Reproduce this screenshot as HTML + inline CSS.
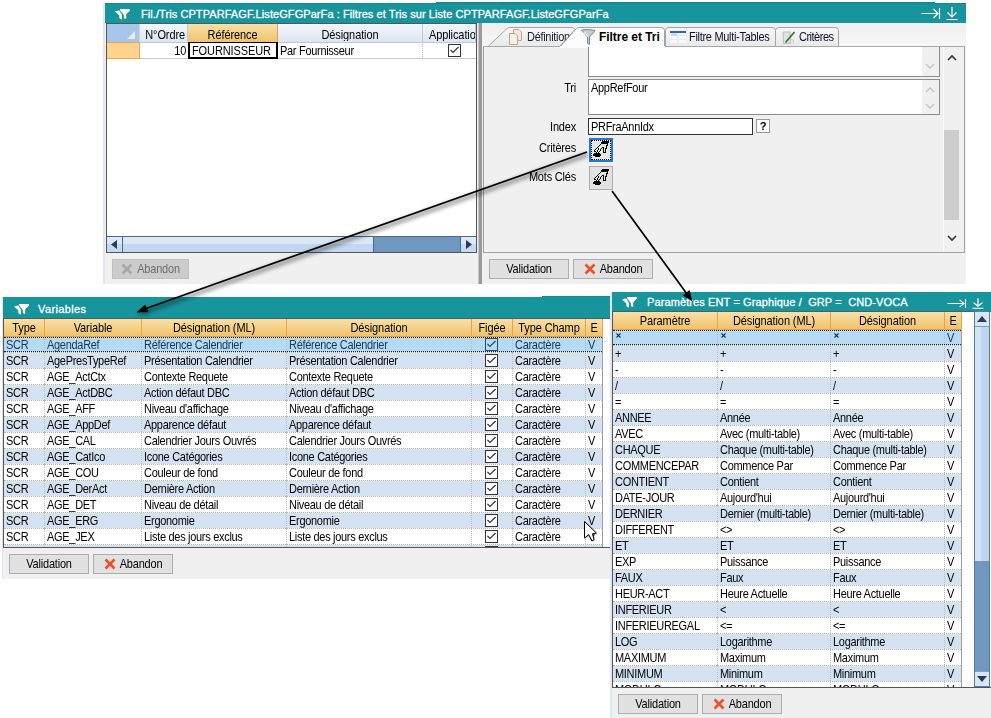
<!DOCTYPE html><html><head><meta charset="utf-8"><style>
*{box-sizing:border-box;margin:0;padding:0}
html,body{width:991px;height:718px;overflow:hidden;background:#fff}
body{position:relative;font-family:"Liberation Sans",sans-serif;font-size:11px;color:#000}
.a{position:absolute}
.win{position:absolute;background:#f0f0f0}
.tb{position:absolute;background:#18949c;color:#fff;font-weight:normal;font-size:11px;white-space:nowrap;overflow:hidden;-webkit-text-stroke:0.3px #fff}
.hd{position:absolute;background:linear-gradient(#f9e0a8,#f0c36c);border-bottom:1px solid #f29a30;border-right:1px solid #f0a040;text-align:center;white-space:nowrap;overflow:hidden;letter-spacing:-0.1px}
i.s{font-style:normal;display:inline-block;transform:scaleY(1.12);transform-origin:0 9px}
.c i{font-style:normal;display:inline-block;transform:scaleY(1.12);transform-origin:0 11px;position:relative;top:1px}
.c{position:absolute;height:16px;line-height:16px;padding-left:3px;overflow:hidden;white-space:nowrap;letter-spacing:-0.3px}
.btn{position:absolute;height:20px;background:#e1e1e1;border:1px solid #adadad;text-align:center;line-height:18px;white-space:nowrap;letter-spacing:-0.2px}
.lbl{position:absolute;text-align:right;white-space:nowrap;letter-spacing:-0.2px}
.chk{position:absolute;width:13px;height:13px;border:1px solid #333;background:#fff}
svg{position:absolute;overflow:visible}
</style></head><body>
<div class="win" style="left:103px;top:3px;width:863px;height:281px;border-left:2px solid #dfe8f1"></div>
<div class="tb" style="left:105px;top:3px;width:861px;height:20px;line-height:20px"><span class="a" style="left:36px;top:1px;letter-spacing:0.074px">Fil./Tris CPTPARFAGF.ListeGFGParFa : Filtres et Tris sur Liste CPTPARFAGF.ListeGFGParFa</span></div>
<div class="a" style="left:436px;top:2px;width:499px;height:1px;background:#138a92"></div>
<div class="a" style="left:105px;top:3px;width:861px;height:1px;background:#138a92"></div>
<svg class="a" style="left:115px;top:9px" width="16" height="12" viewBox="0 0 16 12"><path d="M5 0 H15 V1.5 L11.2 5.3 V9.8 L9.8 9.8 L8.8 8.6 V5.9 L5 1.3 Z" fill="#fff"/><path d="M0 2.2 L4.3 1.5 L6.9 5.7 V10.5 L5.9 10.3 L4.3 8.9 V6.6 Z" fill="#fff"/></svg>
<svg class="a" style="left:921px;top:8px" width="42" height="16" viewBox="0 0 42 16"><g transform="scale(1,1.0)"><path d="M0.5 5.5 H17 M12.5 1 L17 5.5 L12.5 10 M18.5 0 V11" stroke="#fff" stroke-width="1.2" fill="none"/><path d="M31 -1 V9 M26.5 4.5 L31 9 L35.5 4.5 M25.5 11.5 H36.5" stroke="#fff" stroke-width="1.2" fill="none"/></g></svg>
<div class="a" style="left:106px;top:23px;width:371px;height:230px;background:#fff;border:1px solid #555"></div>
<div class="a" style="left:107px;top:24px;width:33px;height:19px;background:#a8c4e8;border-right:1px solid #c9d6ea"></div>
<svg class="a" style="left:127px;top:31px" width="8" height="8"><path d="M8 0 L8 8 L0 8 Z" fill="#e4ecf6"/></svg>
<div class="hd" style="left:140px;top:24px;width:48px;height:19px;line-height:20px;background:linear-gradient(#f3f6fb,#dde5f1);border-right:1px solid #b9c9de;border-bottom:1px solid #b9c9de;text-align:right;padding-right:2px"><i class="s">N°Ordre</i></div>
<div class="hd" style="left:188px;top:24px;width:90px;height:19px;line-height:20px"><i class="s">Référence</i></div>
<div class="hd" style="left:278px;top:24px;width:145px;height:19px;line-height:20px;background:linear-gradient(#f3f6fb,#dde5f1);border-right:1px solid #b9c9de;border-bottom:1px solid #b9c9de"><i class="s">Désignation</i></div>
<div class="hd" style="left:423px;top:24px;width:53px;height:19px;line-height:20px;background:linear-gradient(#f3f6fb,#dde5f1);border-right:1px solid #b9c9de;border-bottom:1px solid #b9c9de;text-align:left;padding-left:6px"><i class="s">Application</i></div>
<div class="a" style="left:107px;top:42px;width:33px;height:17px;background:#fdd38e;border:1px solid #f4a24c;border-left:none"></div>
<div class="c" style="left:140px;top:42px;width:48px;height:17px;text-align:right;padding-right:2px;border-bottom:1px solid #c8c8c8"><i>10</i></div>
<div class="c" style="left:188px;top:42px;width:90px;height:17px;border:2px solid #000;border-top:1px solid #000;line-height:14px;padding-left:2px;letter-spacing:-0.1px"><i>FOURNISSEUR</i></div>
<div class="c" style="left:278px;top:42px;width:145px;height:17px;border-bottom:1px solid #c8c8c8;border-right:1px dotted #bbb;padding-left:2px"><i>Par Fournisseur</i></div>
<div class="c" style="left:423px;top:42px;width:53px;height:17px;border-bottom:1px solid #c8c8c8"></div>
<svg class="a" style="left:448px;top:44px" width="13" height="13" viewBox="0 0 13 13"><rect x="0.5" y="0.5" width="12" height="12" fill="#fff" stroke="#333" stroke-width="1"/><path d="M2.5 6 L5 8.5 L10.5 3" stroke="#333" stroke-width="1.2" fill="none"/></svg>
<div class="a" style="left:107px;top:236px;width:369px;height:16px;background:#7097c0;border-top:1px solid #4d6a8c"></div>
<div class="a" style="left:122px;top:237px;width:252px;height:15px;background:linear-gradient(#d9e7f7 0 45%,#c2d7f0 45%);border-left:1px solid #4d6a8c;border-right:1px solid #4d6a8c"></div>
<div class="a" style="left:107px;top:237px;width:15px;height:15px;background:linear-gradient(#dbe8f7 0 45%,#c5d9f0 45%)"></div>
<svg class="a" style="left:111px;top:240px" width="6" height="9"><path d="M6 0 L0 4.5 L6 9 Z" fill="#2b3a55"/></svg>
<div class="a" style="left:460px;top:237px;width:16px;height:15px;background:linear-gradient(#dbe8f7 0 45%,#c5d9f0 45%);border-left:1px solid #4d6a8c"></div>
<svg class="a" style="left:466px;top:240px" width="6" height="9"><path d="M0 0 L6 4.5 L0 9 Z" fill="#2b3a55"/></svg>
<div class="btn" style="left:112px;top:259px;width:77px;background:#cccccc;border-color:#bfbfbf;color:#6d6d6d;padding-left:16px"><i class="s">Abandon</i></div>
<svg class="a" style="left:121px;top:263px" width="12" height="12" viewBox="0 0 12 12"><path d="M1.5 1.5 L10.5 10.5 M10.5 1.5 L1.5 10.5" stroke="#a8a8a8" stroke-width="2.7" fill="none"/></svg>
<div class="a" style="left:478px;top:23px;width:4px;height:261px;background:#9a9a9a;border-left:1px solid #c8c8c8"></div>
<div class="a" style="left:483px;top:23px;width:483px;height:24px;background:linear-gradient(#efefef,#f7f7f7)"></div>
<div class="a" style="left:483px;top:46px;width:482px;height:207px;background:#f0f0f0;border:1px solid #a0a0a0;border-top:1px solid #a8a8a8"></div>
<svg class="a" style="left:483px;top:26px" width="360" height="22" viewBox="0 0 360 22">
<defs><linearGradient id="tg" x1="0" y1="0" x2="0" y2="1"><stop offset="0" stop-color="#f7f7f7"/><stop offset="1" stop-color="#e9e9e9"/></linearGradient></defs>
<path d="M5.5 20 L24 2.5 Q25 1.5 27 1.5 H90 L92 3.5 L77 20" fill="url(#tg)" stroke="#a3a3a3" stroke-width="1"/>
<path d="M182.5 20 V4.5 Q182.5 1.5 186 1.5 H289 Q292.5 1.5 292.5 4.5 V20" fill="url(#tg)" stroke="#a3a3a3" stroke-width="1"/>
<path d="M292.5 20 V4.5 Q292.5 1.5 296 1.5 H352 Q355.5 1.5 355.5 4.5 V20" fill="url(#tg)" stroke="#a3a3a3" stroke-width="1"/>
</svg>
<div class="a" style="left:527px;top:31px;letter-spacing:-0.3px;color:#1a1a3a"><i class="s">Définition</i></div>
<svg class="a" style="left:483px;top:26px" width="360" height="22" viewBox="0 0 360 22">
<path d="M77 21 L92.5 3.5 Q94 1.5 97 1.5 H178 Q181.5 1.5 181.5 4.5 V21 Z" fill="#fcfcfc" stroke="#a3a3a3" stroke-width="1"/>
<rect x="77" y="20" width="105" height="2" fill="#fcfcfc"/>
</svg>
<div class="a" style="left:599px;top:30px;font-weight:bold;letter-spacing:-0.05px;font-size:12px">Filtre et Tri</div>
<div class="a" style="left:689px;top:31px;letter-spacing:-0.3px;color:#10102a"><i class="s">Filtre Multi-Tables</i></div>
<div class="a" style="left:799px;top:31px;letter-spacing:-0.5px;color:#10102a"><i class="s">Critères</i></div>
<svg class="a" style="left:509px;top:29px" width="14" height="16" viewBox="0 0 14 16"><path d="M4.5 0.5 H10 L12.5 3 V11.5 H4.5 Z" fill="#f1eadc" stroke="#b4aa94" stroke-width="1"/><path d="M0.5 4.5 H6 L8.5 7 V15.5 H0.5 Z" fill="#f6f1e6" stroke="#b4aa94" stroke-width="1"/></svg>
<svg class="a" style="left:581px;top:29px" width="15" height="16" viewBox="0 0 15 16"><path d="M0.5 1 Q7 -0.5 14 1.5 L8.5 8 V15.5 L6.5 14.5 V8 Z" fill="#c4ccd4" stroke="#7a8894" stroke-width="1"/><path d="M3 3 L7 7.5" stroke="#eef2f5" stroke-width="1.5"/></svg>
<svg class="a" style="left:670px;top:31px" width="16" height="13" viewBox="0 0 16 13"><rect x="0" y="0" width="16" height="12" fill="#f4f7fb"/><path d="M0 4.5 H16 M0 8.5 H16 M8 2 V12" stroke="#e2e8f0" stroke-width="1"/><rect x="0" y="0" width="16" height="2" fill="#1f66d0"/><rect x="1" y="2.5" width="6" height="2" fill="#c8cfd8"/></svg>
<svg class="a" style="left:782px;top:31px" width="15" height="14" viewBox="0 0 15 14"><path d="M1 1 H8 L8.5 12.5 H1.5 Z" fill="#e2e2e2" stroke="#bdbdbd" stroke-width="1"/><path d="M3.5 11.5 L12.5 1" stroke="#2f7d2f" stroke-width="1.8"/><path d="M9 8 Q13 9 11 12" stroke="#c9c9c9" fill="none"/></svg>
<div class="a" style="left:588px;top:47px;width:352px;height:30px;background:#fff;border:1px solid #8c8c8c;border-top:none"></div>
<div class="a" style="left:922px;top:47px;width:17px;height:29px;background:#f0f0f0"></div>
<svg class="a" style="left:925px;top:63px" width="10" height="6"><path d="M1 1 L5 5 L9 1" stroke="#c2c2c2" stroke-width="1.3" fill="none"/></svg>
<div class="lbl" style="left:540px;top:82px;width:36px"><i class="s">Tri</i></div>
<div class="a" style="left:588px;top:79px;width:352px;height:36px;background:#fff;border:1px solid #8c8c8c"></div>
<div class="a" style="left:922px;top:80px;width:17px;height:34px;background:#f0f0f0"></div>
<svg class="a" style="left:925px;top:87px" width="10" height="6"><path d="M1 5 L5 1 L9 5" stroke="#c2c2c2" stroke-width="1.3" fill="none"/></svg>
<svg class="a" style="left:925px;top:103px" width="10" height="6"><path d="M1 1 L5 5 L9 1" stroke="#c2c2c2" stroke-width="1.3" fill="none"/></svg>
<div class="a" style="left:591px;top:82px;letter-spacing:-0.3px"><i class="s">AppRefFour</i></div>
<div class="lbl" style="left:520px;top:121px;width:56px"><i class="s">Index</i></div>
<div class="a" style="left:588px;top:118px;width:165px;height:17px;background:#fff;border:1px solid #333;padding-left:2px;line-height:17px;letter-spacing:-0.3px"><i class="s">PRFraAnnIdx</i></div>
<div class="a" style="left:756px;top:119px;width:14px;height:14px;background:#fff;border:1px solid #999;font-weight:bold;text-align:center;line-height:12px;font-size:11px">?</div>
<div class="lbl" style="left:500px;top:142px;width:76px"><i class="s">Critères</i></div>
<div class="lbl" style="left:500px;top:171px;width:76px"><i class="s">Mots Clés</i></div>
<div class="a" style="left:589px;top:138px;width:24px;height:24px;background:#e5e5e5;border:2px solid #1e78e0"></div>
<div class="a" style="left:591px;top:140px;width:20px;height:20px;border:1px dotted #000"></div>
<div class="a" style="left:589px;top:166px;width:24px;height:24px;background:#e1e1e1;border:1px solid #adadad"></div>
<svg class="a" style="left:589px;top:138px" width="24" height="24" viewBox="0 0 24 24" shape-rendering="crispEdges"><g fill="#000"><rect x="13" y="3" width="7" height="1"/><rect x="12" y="4" width="8" height="1"/><rect x="12" y="5" width="7" height="1"/><rect x="11" y="6" width="1" height="1"/><rect x="18" y="6" width="1" height="1"/><rect x="10" y="7" width="1" height="1"/><rect x="17" y="7" width="2" height="1"/><rect x="9" y="8" width="1" height="1"/><rect x="17" y="8" width="1" height="1"/><rect x="8" y="9" width="1" height="1"/><rect x="13" y="9" width="2" height="1"/><rect x="17" y="9" width="1" height="1"/><rect x="7" y="10" width="1" height="1"/><rect x="9" y="10" width="1" height="1"/><rect x="12" y="10" width="1" height="1"/><rect x="14" y="10" width="1" height="1"/><rect x="16" y="10" width="2" height="1"/><rect x="6" y="11" width="1" height="1"/><rect x="9" y="11" width="1" height="1"/><rect x="11" y="11" width="1" height="1"/><rect x="14" y="11" width="1" height="1"/><rect x="16" y="11" width="1" height="1"/><rect x="5" y="12" width="1" height="1"/><rect x="8" y="12" width="1" height="1"/><rect x="11" y="12" width="1" height="1"/><rect x="14" y="12" width="1" height="1"/><rect x="16" y="12" width="1" height="1"/><rect x="5" y="13" width="2" height="1"/><rect x="8" y="13" width="1" height="1"/><rect x="10" y="13" width="1" height="1"/><rect x="14" y="13" width="1" height="1"/><rect x="16" y="13" width="1" height="1"/><rect x="7" y="14" width="1" height="1"/><rect x="9" y="14" width="1" height="1"/><rect x="14" y="14" width="3" height="1"/><rect x="5" y="15" width="6" height="1"/><rect x="4" y="16" width="8" height="1"/><rect x="4" y="17" width="8" height="1"/><rect x="6" y="18" width="5" height="1"/></g></svg>
<svg class="a" style="left:589px;top:166px" width="24" height="24" viewBox="0 0 24 24" shape-rendering="crispEdges"><g fill="#000"><rect x="13" y="3" width="7" height="1"/><rect x="12" y="4" width="8" height="1"/><rect x="12" y="5" width="7" height="1"/><rect x="11" y="6" width="1" height="1"/><rect x="18" y="6" width="1" height="1"/><rect x="10" y="7" width="1" height="1"/><rect x="17" y="7" width="2" height="1"/><rect x="9" y="8" width="1" height="1"/><rect x="17" y="8" width="1" height="1"/><rect x="8" y="9" width="1" height="1"/><rect x="13" y="9" width="2" height="1"/><rect x="17" y="9" width="1" height="1"/><rect x="7" y="10" width="1" height="1"/><rect x="9" y="10" width="1" height="1"/><rect x="12" y="10" width="1" height="1"/><rect x="14" y="10" width="1" height="1"/><rect x="16" y="10" width="2" height="1"/><rect x="6" y="11" width="1" height="1"/><rect x="9" y="11" width="1" height="1"/><rect x="11" y="11" width="1" height="1"/><rect x="14" y="11" width="1" height="1"/><rect x="16" y="11" width="1" height="1"/><rect x="5" y="12" width="1" height="1"/><rect x="8" y="12" width="1" height="1"/><rect x="11" y="12" width="1" height="1"/><rect x="14" y="12" width="1" height="1"/><rect x="16" y="12" width="1" height="1"/><rect x="5" y="13" width="2" height="1"/><rect x="8" y="13" width="1" height="1"/><rect x="10" y="13" width="1" height="1"/><rect x="14" y="13" width="1" height="1"/><rect x="16" y="13" width="1" height="1"/><rect x="7" y="14" width="1" height="1"/><rect x="9" y="14" width="1" height="1"/><rect x="14" y="14" width="3" height="1"/><rect x="5" y="15" width="6" height="1"/><rect x="4" y="16" width="8" height="1"/><rect x="4" y="17" width="8" height="1"/><rect x="6" y="18" width="5" height="1"/></g></svg>
<div class="a" style="left:944px;top:47px;width:20px;height:205px;background:#f0f0f0"></div>
<svg class="a" style="left:947px;top:54px" width="10" height="7"><path d="M1 6 L5 2 L9 6" stroke="#333" stroke-width="1.6" fill="none"/></svg>
<div class="a" style="left:943px;top:47px;width:1px;height:205px;background:#fafafa"></div>
<div class="a" style="left:944px;top:130px;width:15px;height:90px;background:#cdcdcd"></div>
<svg class="a" style="left:947px;top:235px" width="10" height="7"><path d="M1 1 L5 5 L9 1" stroke="#333" stroke-width="1.6" fill="none"/></svg>
<div class="btn" style="left:489px;top:259px;width:80px"><i class="s">Validation</i></div>
<div class="btn" style="left:573px;top:259px;width:80px;padding-left:16px"><i class="s">Abandon</i></div>
<svg class="a" style="left:584px;top:263px" width="12" height="12" viewBox="0 0 12 12"><path d="M1.5 1.5 L10.5 10.5 M10.5 1.5 L1.5 10.5" stroke="#e8542a" stroke-width="2.7" fill="none"/></svg>
<div class="win" style="left:2px;top:297px;width:608px;height:282px;border-left:1px solid #dfe8f1"></div>
<div class="tb" style="left:3px;top:297px;width:607px;height:21px;line-height:22px"><span class="a" style="left:35px;top:1px;letter-spacing:0.37px">Variables</span></div>
<div class="a" style="left:542px;top:296px;width:68px;height:1px;background:#138a92"></div>
<svg class="a" style="left:14px;top:304px" width="16" height="12" viewBox="0 0 16 12"><path d="M5 0 H15 V1.5 L11.2 5.3 V9.8 L9.8 9.8 L8.8 8.6 V5.9 L5 1.3 Z" fill="#fff"/><path d="M0 2.2 L4.3 1.5 L6.9 5.7 V10.5 L5.9 10.3 L4.3 8.9 V6.6 Z" fill="#fff"/></svg>
<div class="a" style="left:3px;top:318px;width:607px;height:230px;background:#fff;border-bottom:1px solid #555;border-left:1px solid #555;border-top:1px solid #4e5e60"></div>
<div class="hd" style="left:4px;top:319px;width:41px;height:18px;line-height:18px"><i class="s">Type</i></div>
<div class="hd" style="left:45px;top:319px;width:97px;height:18px;line-height:18px"><i class="s">Variable</i></div>
<div class="hd" style="left:142px;top:319px;width:145px;height:18px;line-height:18px"><i class="s">Désignation (ML)</i></div>
<div class="hd" style="left:287px;top:319px;width:185px;height:18px;line-height:18px"><i class="s">Désignation</i></div>
<div class="hd" style="left:472px;top:319px;width:41px;height:18px;line-height:18px"><i class="s">Figée</i></div>
<div class="hd" style="left:513px;top:319px;width:73px;height:18px;line-height:18px"><i class="s">Type Champ</i></div>
<div class="hd" style="left:586px;top:319px;width:17px;height:18px;line-height:18px"><i class="s">E</i></div>
<div class="a" style="left:4px;top:336px;width:598px;height:16px;background:#b7daf4;border-top:1px solid transparent;background-clip:padding-box"></div>
<div class="c" style="left:4px;top:336px;width:41px;height:16px;color:#1c3552;border-right:1px dotted #bcbcbc;padding-left:2px;line-height:17px"><i>SCR</i></div>
<div class="c" style="left:45px;top:336px;width:97px;height:16px;color:#1c3552;border-right:1px dotted #bcbcbc;padding-left:2px;line-height:17px"><i>AgendaRef</i></div>
<div class="c" style="left:142px;top:336px;width:145px;height:16px;color:#1c3552;border-right:1px dotted #bcbcbc;padding-left:2px;line-height:17px"><i>Référence Calendrier</i></div>
<div class="c" style="left:287px;top:336px;width:185px;height:16px;color:#1c3552;border-right:1px dotted #bcbcbc;padding-left:2px;line-height:17px"><i>Référence Calendrier</i></div>
<div class="c" style="left:472px;top:336px;width:41px;height:16px;color:#1c3552;border-right:1px dotted #bcbcbc;padding-left:2px;line-height:17px"><i></i></div>
<div class="c" style="left:513px;top:336px;width:73px;height:16px;color:#1c3552;border-right:1px dotted #bcbcbc;padding-left:2px;line-height:17px"><i>Caractère</i></div>
<div class="c" style="left:586px;top:336px;width:17px;height:16px;color:#1c3552;border-right:1px dotted #bcbcbc;padding-left:2px;line-height:17px"><i>V</i></div>
<svg class="a" style="left:485px;top:338px" width="13" height="13" viewBox="0 0 13 13"><rect x="0.5" y="0.5" width="12" height="12" fill="none" stroke="#2a4a6e" stroke-width="1"/><path d="M2.5 6 L5 8.5 L10.5 3" stroke="#2a4a6e" stroke-width="1.2" fill="none"/></svg>
<div class="a" style="left:4px;top:352px;width:598px;height:16px;background:#d5e2f2;border-top:1px dotted #b4b4b4;background-clip:padding-box"></div>
<div class="c" style="left:4px;top:352px;width:41px;height:16px;color:#000;border-right:1px dotted #bcbcbc;padding-left:2px;line-height:17px"><i>SCR</i></div>
<div class="c" style="left:45px;top:352px;width:97px;height:16px;color:#000;border-right:1px dotted #bcbcbc;padding-left:2px;line-height:17px"><i>AgePresTypeRef</i></div>
<div class="c" style="left:142px;top:352px;width:145px;height:16px;color:#000;border-right:1px dotted #bcbcbc;padding-left:2px;line-height:17px"><i>Présentation Calendrier</i></div>
<div class="c" style="left:287px;top:352px;width:185px;height:16px;color:#000;border-right:1px dotted #bcbcbc;padding-left:2px;line-height:17px"><i>Présentation Calendrier</i></div>
<div class="c" style="left:472px;top:352px;width:41px;height:16px;color:#000;border-right:1px dotted #bcbcbc;padding-left:2px;line-height:17px"><i></i></div>
<div class="c" style="left:513px;top:352px;width:73px;height:16px;color:#000;border-right:1px dotted #bcbcbc;padding-left:2px;line-height:17px"><i>Caractère</i></div>
<div class="c" style="left:586px;top:352px;width:17px;height:16px;color:#000;border-right:1px dotted #bcbcbc;padding-left:2px;line-height:17px"><i>V</i></div>
<svg class="a" style="left:485px;top:354px" width="13" height="13" viewBox="0 0 13 13"><rect x="0.5" y="0.5" width="12" height="12" fill="#fff" stroke="#333" stroke-width="1"/><path d="M2.5 6 L5 8.5 L10.5 3" stroke="#333" stroke-width="1.2" fill="none"/></svg>
<div class="a" style="left:4px;top:368px;width:598px;height:16px;background:#fff;border-top:1px dotted #b4b4b4;background-clip:padding-box"></div>
<div class="c" style="left:4px;top:368px;width:41px;height:16px;color:#000;border-right:1px dotted #bcbcbc;padding-left:2px;line-height:17px"><i>SCR</i></div>
<div class="c" style="left:45px;top:368px;width:97px;height:16px;color:#000;border-right:1px dotted #bcbcbc;padding-left:2px;line-height:17px"><i>AGE_ActCtx</i></div>
<div class="c" style="left:142px;top:368px;width:145px;height:16px;color:#000;border-right:1px dotted #bcbcbc;padding-left:2px;line-height:17px"><i>Contexte Requete</i></div>
<div class="c" style="left:287px;top:368px;width:185px;height:16px;color:#000;border-right:1px dotted #bcbcbc;padding-left:2px;line-height:17px"><i>Contexte Requete</i></div>
<div class="c" style="left:472px;top:368px;width:41px;height:16px;color:#000;border-right:1px dotted #bcbcbc;padding-left:2px;line-height:17px"><i></i></div>
<div class="c" style="left:513px;top:368px;width:73px;height:16px;color:#000;border-right:1px dotted #bcbcbc;padding-left:2px;line-height:17px"><i>Caractère</i></div>
<div class="c" style="left:586px;top:368px;width:17px;height:16px;color:#000;border-right:1px dotted #bcbcbc;padding-left:2px;line-height:17px"><i>V</i></div>
<svg class="a" style="left:485px;top:370px" width="13" height="13" viewBox="0 0 13 13"><rect x="0.5" y="0.5" width="12" height="12" fill="#fff" stroke="#333" stroke-width="1"/><path d="M2.5 6 L5 8.5 L10.5 3" stroke="#333" stroke-width="1.2" fill="none"/></svg>
<div class="a" style="left:4px;top:384px;width:598px;height:16px;background:#d5e2f2;border-top:1px dotted #b4b4b4;background-clip:padding-box"></div>
<div class="c" style="left:4px;top:384px;width:41px;height:16px;color:#000;border-right:1px dotted #bcbcbc;padding-left:2px;line-height:17px"><i>SCR</i></div>
<div class="c" style="left:45px;top:384px;width:97px;height:16px;color:#000;border-right:1px dotted #bcbcbc;padding-left:2px;line-height:17px"><i>AGE_ActDBC</i></div>
<div class="c" style="left:142px;top:384px;width:145px;height:16px;color:#000;border-right:1px dotted #bcbcbc;padding-left:2px;line-height:17px"><i>Action défaut DBC</i></div>
<div class="c" style="left:287px;top:384px;width:185px;height:16px;color:#000;border-right:1px dotted #bcbcbc;padding-left:2px;line-height:17px"><i>Action défaut DBC</i></div>
<div class="c" style="left:472px;top:384px;width:41px;height:16px;color:#000;border-right:1px dotted #bcbcbc;padding-left:2px;line-height:17px"><i></i></div>
<div class="c" style="left:513px;top:384px;width:73px;height:16px;color:#000;border-right:1px dotted #bcbcbc;padding-left:2px;line-height:17px"><i>Caractère</i></div>
<div class="c" style="left:586px;top:384px;width:17px;height:16px;color:#000;border-right:1px dotted #bcbcbc;padding-left:2px;line-height:17px"><i>V</i></div>
<svg class="a" style="left:485px;top:386px" width="13" height="13" viewBox="0 0 13 13"><rect x="0.5" y="0.5" width="12" height="12" fill="#fff" stroke="#333" stroke-width="1"/><path d="M2.5 6 L5 8.5 L10.5 3" stroke="#333" stroke-width="1.2" fill="none"/></svg>
<div class="a" style="left:4px;top:400px;width:598px;height:16px;background:#fff;border-top:1px dotted #b4b4b4;background-clip:padding-box"></div>
<div class="c" style="left:4px;top:400px;width:41px;height:16px;color:#000;border-right:1px dotted #bcbcbc;padding-left:2px;line-height:17px"><i>SCR</i></div>
<div class="c" style="left:45px;top:400px;width:97px;height:16px;color:#000;border-right:1px dotted #bcbcbc;padding-left:2px;line-height:17px"><i>AGE_AFF</i></div>
<div class="c" style="left:142px;top:400px;width:145px;height:16px;color:#000;border-right:1px dotted #bcbcbc;padding-left:2px;line-height:17px"><i>Niveau d'affichage</i></div>
<div class="c" style="left:287px;top:400px;width:185px;height:16px;color:#000;border-right:1px dotted #bcbcbc;padding-left:2px;line-height:17px"><i>Niveau d'affichage</i></div>
<div class="c" style="left:472px;top:400px;width:41px;height:16px;color:#000;border-right:1px dotted #bcbcbc;padding-left:2px;line-height:17px"><i></i></div>
<div class="c" style="left:513px;top:400px;width:73px;height:16px;color:#000;border-right:1px dotted #bcbcbc;padding-left:2px;line-height:17px"><i>Caractère</i></div>
<div class="c" style="left:586px;top:400px;width:17px;height:16px;color:#000;border-right:1px dotted #bcbcbc;padding-left:2px;line-height:17px"><i>V</i></div>
<svg class="a" style="left:485px;top:402px" width="13" height="13" viewBox="0 0 13 13"><rect x="0.5" y="0.5" width="12" height="12" fill="#fff" stroke="#333" stroke-width="1"/><path d="M2.5 6 L5 8.5 L10.5 3" stroke="#333" stroke-width="1.2" fill="none"/></svg>
<div class="a" style="left:4px;top:416px;width:598px;height:16px;background:#d5e2f2;border-top:1px dotted #b4b4b4;background-clip:padding-box"></div>
<div class="c" style="left:4px;top:416px;width:41px;height:16px;color:#000;border-right:1px dotted #bcbcbc;padding-left:2px;line-height:17px"><i>SCR</i></div>
<div class="c" style="left:45px;top:416px;width:97px;height:16px;color:#000;border-right:1px dotted #bcbcbc;padding-left:2px;line-height:17px"><i>AGE_AppDef</i></div>
<div class="c" style="left:142px;top:416px;width:145px;height:16px;color:#000;border-right:1px dotted #bcbcbc;padding-left:2px;line-height:17px"><i>Apparence défaut</i></div>
<div class="c" style="left:287px;top:416px;width:185px;height:16px;color:#000;border-right:1px dotted #bcbcbc;padding-left:2px;line-height:17px"><i>Apparence défaut</i></div>
<div class="c" style="left:472px;top:416px;width:41px;height:16px;color:#000;border-right:1px dotted #bcbcbc;padding-left:2px;line-height:17px"><i></i></div>
<div class="c" style="left:513px;top:416px;width:73px;height:16px;color:#000;border-right:1px dotted #bcbcbc;padding-left:2px;line-height:17px"><i>Caractère</i></div>
<div class="c" style="left:586px;top:416px;width:17px;height:16px;color:#000;border-right:1px dotted #bcbcbc;padding-left:2px;line-height:17px"><i>V</i></div>
<svg class="a" style="left:485px;top:418px" width="13" height="13" viewBox="0 0 13 13"><rect x="0.5" y="0.5" width="12" height="12" fill="#fff" stroke="#333" stroke-width="1"/><path d="M2.5 6 L5 8.5 L10.5 3" stroke="#333" stroke-width="1.2" fill="none"/></svg>
<div class="a" style="left:4px;top:432px;width:598px;height:16px;background:#fff;border-top:1px dotted #b4b4b4;background-clip:padding-box"></div>
<div class="c" style="left:4px;top:432px;width:41px;height:16px;color:#000;border-right:1px dotted #bcbcbc;padding-left:2px;line-height:17px"><i>SCR</i></div>
<div class="c" style="left:45px;top:432px;width:97px;height:16px;color:#000;border-right:1px dotted #bcbcbc;padding-left:2px;line-height:17px"><i>AGE_CAL</i></div>
<div class="c" style="left:142px;top:432px;width:145px;height:16px;color:#000;border-right:1px dotted #bcbcbc;padding-left:2px;line-height:17px"><i>Calendrier Jours Ouvrés</i></div>
<div class="c" style="left:287px;top:432px;width:185px;height:16px;color:#000;border-right:1px dotted #bcbcbc;padding-left:2px;line-height:17px"><i>Calendrier Jours Ouvrés</i></div>
<div class="c" style="left:472px;top:432px;width:41px;height:16px;color:#000;border-right:1px dotted #bcbcbc;padding-left:2px;line-height:17px"><i></i></div>
<div class="c" style="left:513px;top:432px;width:73px;height:16px;color:#000;border-right:1px dotted #bcbcbc;padding-left:2px;line-height:17px"><i>Caractère</i></div>
<div class="c" style="left:586px;top:432px;width:17px;height:16px;color:#000;border-right:1px dotted #bcbcbc;padding-left:2px;line-height:17px"><i>V</i></div>
<svg class="a" style="left:485px;top:434px" width="13" height="13" viewBox="0 0 13 13"><rect x="0.5" y="0.5" width="12" height="12" fill="#fff" stroke="#333" stroke-width="1"/><path d="M2.5 6 L5 8.5 L10.5 3" stroke="#333" stroke-width="1.2" fill="none"/></svg>
<div class="a" style="left:4px;top:448px;width:598px;height:16px;background:#d5e2f2;border-top:1px dotted #b4b4b4;background-clip:padding-box"></div>
<div class="c" style="left:4px;top:448px;width:41px;height:16px;color:#000;border-right:1px dotted #bcbcbc;padding-left:2px;line-height:17px"><i>SCR</i></div>
<div class="c" style="left:45px;top:448px;width:97px;height:16px;color:#000;border-right:1px dotted #bcbcbc;padding-left:2px;line-height:17px"><i>AGE_CatIco</i></div>
<div class="c" style="left:142px;top:448px;width:145px;height:16px;color:#000;border-right:1px dotted #bcbcbc;padding-left:2px;line-height:17px"><i>Icone Catégories</i></div>
<div class="c" style="left:287px;top:448px;width:185px;height:16px;color:#000;border-right:1px dotted #bcbcbc;padding-left:2px;line-height:17px"><i>Icone Catégories</i></div>
<div class="c" style="left:472px;top:448px;width:41px;height:16px;color:#000;border-right:1px dotted #bcbcbc;padding-left:2px;line-height:17px"><i></i></div>
<div class="c" style="left:513px;top:448px;width:73px;height:16px;color:#000;border-right:1px dotted #bcbcbc;padding-left:2px;line-height:17px"><i>Caractère</i></div>
<div class="c" style="left:586px;top:448px;width:17px;height:16px;color:#000;border-right:1px dotted #bcbcbc;padding-left:2px;line-height:17px"><i>V</i></div>
<svg class="a" style="left:485px;top:450px" width="13" height="13" viewBox="0 0 13 13"><rect x="0.5" y="0.5" width="12" height="12" fill="#fff" stroke="#333" stroke-width="1"/><path d="M2.5 6 L5 8.5 L10.5 3" stroke="#333" stroke-width="1.2" fill="none"/></svg>
<div class="a" style="left:4px;top:464px;width:598px;height:16px;background:#fff;border-top:1px dotted #b4b4b4;background-clip:padding-box"></div>
<div class="c" style="left:4px;top:464px;width:41px;height:16px;color:#000;border-right:1px dotted #bcbcbc;padding-left:2px;line-height:17px"><i>SCR</i></div>
<div class="c" style="left:45px;top:464px;width:97px;height:16px;color:#000;border-right:1px dotted #bcbcbc;padding-left:2px;line-height:17px"><i>AGE_COU</i></div>
<div class="c" style="left:142px;top:464px;width:145px;height:16px;color:#000;border-right:1px dotted #bcbcbc;padding-left:2px;line-height:17px"><i>Couleur de fond</i></div>
<div class="c" style="left:287px;top:464px;width:185px;height:16px;color:#000;border-right:1px dotted #bcbcbc;padding-left:2px;line-height:17px"><i>Couleur de fond</i></div>
<div class="c" style="left:472px;top:464px;width:41px;height:16px;color:#000;border-right:1px dotted #bcbcbc;padding-left:2px;line-height:17px"><i></i></div>
<div class="c" style="left:513px;top:464px;width:73px;height:16px;color:#000;border-right:1px dotted #bcbcbc;padding-left:2px;line-height:17px"><i>Caractère</i></div>
<div class="c" style="left:586px;top:464px;width:17px;height:16px;color:#000;border-right:1px dotted #bcbcbc;padding-left:2px;line-height:17px"><i>V</i></div>
<svg class="a" style="left:485px;top:466px" width="13" height="13" viewBox="0 0 13 13"><rect x="0.5" y="0.5" width="12" height="12" fill="#fff" stroke="#333" stroke-width="1"/><path d="M2.5 6 L5 8.5 L10.5 3" stroke="#333" stroke-width="1.2" fill="none"/></svg>
<div class="a" style="left:4px;top:480px;width:598px;height:16px;background:#d5e2f2;border-top:1px dotted #b4b4b4;background-clip:padding-box"></div>
<div class="c" style="left:4px;top:480px;width:41px;height:16px;color:#000;border-right:1px dotted #bcbcbc;padding-left:2px;line-height:17px"><i>SCR</i></div>
<div class="c" style="left:45px;top:480px;width:97px;height:16px;color:#000;border-right:1px dotted #bcbcbc;padding-left:2px;line-height:17px"><i>AGE_DerAct</i></div>
<div class="c" style="left:142px;top:480px;width:145px;height:16px;color:#000;border-right:1px dotted #bcbcbc;padding-left:2px;line-height:17px"><i>Dernière Action</i></div>
<div class="c" style="left:287px;top:480px;width:185px;height:16px;color:#000;border-right:1px dotted #bcbcbc;padding-left:2px;line-height:17px"><i>Dernière Action</i></div>
<div class="c" style="left:472px;top:480px;width:41px;height:16px;color:#000;border-right:1px dotted #bcbcbc;padding-left:2px;line-height:17px"><i></i></div>
<div class="c" style="left:513px;top:480px;width:73px;height:16px;color:#000;border-right:1px dotted #bcbcbc;padding-left:2px;line-height:17px"><i>Caractère</i></div>
<div class="c" style="left:586px;top:480px;width:17px;height:16px;color:#000;border-right:1px dotted #bcbcbc;padding-left:2px;line-height:17px"><i>V</i></div>
<svg class="a" style="left:485px;top:482px" width="13" height="13" viewBox="0 0 13 13"><rect x="0.5" y="0.5" width="12" height="12" fill="#fff" stroke="#333" stroke-width="1"/><path d="M2.5 6 L5 8.5 L10.5 3" stroke="#333" stroke-width="1.2" fill="none"/></svg>
<div class="a" style="left:4px;top:496px;width:598px;height:16px;background:#fff;border-top:1px dotted #b4b4b4;background-clip:padding-box"></div>
<div class="c" style="left:4px;top:496px;width:41px;height:16px;color:#000;border-right:1px dotted #bcbcbc;padding-left:2px;line-height:17px"><i>SCR</i></div>
<div class="c" style="left:45px;top:496px;width:97px;height:16px;color:#000;border-right:1px dotted #bcbcbc;padding-left:2px;line-height:17px"><i>AGE_DET</i></div>
<div class="c" style="left:142px;top:496px;width:145px;height:16px;color:#000;border-right:1px dotted #bcbcbc;padding-left:2px;line-height:17px"><i>Niveau de détail</i></div>
<div class="c" style="left:287px;top:496px;width:185px;height:16px;color:#000;border-right:1px dotted #bcbcbc;padding-left:2px;line-height:17px"><i>Niveau de détail</i></div>
<div class="c" style="left:472px;top:496px;width:41px;height:16px;color:#000;border-right:1px dotted #bcbcbc;padding-left:2px;line-height:17px"><i></i></div>
<div class="c" style="left:513px;top:496px;width:73px;height:16px;color:#000;border-right:1px dotted #bcbcbc;padding-left:2px;line-height:17px"><i>Caractère</i></div>
<div class="c" style="left:586px;top:496px;width:17px;height:16px;color:#000;border-right:1px dotted #bcbcbc;padding-left:2px;line-height:17px"><i>V</i></div>
<svg class="a" style="left:485px;top:498px" width="13" height="13" viewBox="0 0 13 13"><rect x="0.5" y="0.5" width="12" height="12" fill="#fff" stroke="#333" stroke-width="1"/><path d="M2.5 6 L5 8.5 L10.5 3" stroke="#333" stroke-width="1.2" fill="none"/></svg>
<div class="a" style="left:4px;top:512px;width:598px;height:16px;background:#d5e2f2;border-top:1px dotted #b4b4b4;background-clip:padding-box"></div>
<div class="c" style="left:4px;top:512px;width:41px;height:16px;color:#000;border-right:1px dotted #bcbcbc;padding-left:2px;line-height:17px"><i>SCR</i></div>
<div class="c" style="left:45px;top:512px;width:97px;height:16px;color:#000;border-right:1px dotted #bcbcbc;padding-left:2px;line-height:17px"><i>AGE_ERG</i></div>
<div class="c" style="left:142px;top:512px;width:145px;height:16px;color:#000;border-right:1px dotted #bcbcbc;padding-left:2px;line-height:17px"><i>Ergonomie</i></div>
<div class="c" style="left:287px;top:512px;width:185px;height:16px;color:#000;border-right:1px dotted #bcbcbc;padding-left:2px;line-height:17px"><i>Ergonomie</i></div>
<div class="c" style="left:472px;top:512px;width:41px;height:16px;color:#000;border-right:1px dotted #bcbcbc;padding-left:2px;line-height:17px"><i></i></div>
<div class="c" style="left:513px;top:512px;width:73px;height:16px;color:#000;border-right:1px dotted #bcbcbc;padding-left:2px;line-height:17px"><i>Caractère</i></div>
<div class="c" style="left:586px;top:512px;width:17px;height:16px;color:#000;border-right:1px dotted #bcbcbc;padding-left:2px;line-height:17px"><i>V</i></div>
<svg class="a" style="left:485px;top:514px" width="13" height="13" viewBox="0 0 13 13"><rect x="0.5" y="0.5" width="12" height="12" fill="#fff" stroke="#333" stroke-width="1"/><path d="M2.5 6 L5 8.5 L10.5 3" stroke="#333" stroke-width="1.2" fill="none"/></svg>
<div class="a" style="left:4px;top:528px;width:598px;height:16px;background:#fff;border-top:1px dotted #b4b4b4;background-clip:padding-box"></div>
<div class="c" style="left:4px;top:528px;width:41px;height:16px;color:#000;border-right:1px dotted #bcbcbc;padding-left:2px;line-height:17px"><i>SCR</i></div>
<div class="c" style="left:45px;top:528px;width:97px;height:16px;color:#000;border-right:1px dotted #bcbcbc;padding-left:2px;line-height:17px"><i>AGE_JEX</i></div>
<div class="c" style="left:142px;top:528px;width:145px;height:16px;color:#000;border-right:1px dotted #bcbcbc;padding-left:2px;line-height:17px"><i>Liste des jours exclus</i></div>
<div class="c" style="left:287px;top:528px;width:185px;height:16px;color:#000;border-right:1px dotted #bcbcbc;padding-left:2px;line-height:17px"><i>Liste des jours exclus</i></div>
<div class="c" style="left:472px;top:528px;width:41px;height:16px;color:#000;border-right:1px dotted #bcbcbc;padding-left:2px;line-height:17px"><i></i></div>
<div class="c" style="left:513px;top:528px;width:73px;height:16px;color:#000;border-right:1px dotted #bcbcbc;padding-left:2px;line-height:17px"><i>Caractère</i></div>
<div class="c" style="left:586px;top:528px;width:17px;height:16px;color:#000;border-right:1px dotted #bcbcbc;padding-left:2px;line-height:17px"><i>V</i></div>
<svg class="a" style="left:485px;top:530px" width="13" height="13" viewBox="0 0 13 13"><rect x="0.5" y="0.5" width="12" height="12" fill="#fff" stroke="#333" stroke-width="1"/><path d="M2.5 6 L5 8.5 L10.5 3" stroke="#333" stroke-width="1.2" fill="none"/></svg>
<div class="a" style="left:4px;top:544px;width:598px;height:3px;background:#d5e2f2;border-top:1px dotted #b4b4b4;background-clip:padding-box"></div>
<div class="c" style="left:4px;top:544px;width:41px;height:3px;color:#000;border-right:1px dotted #bcbcbc;padding-left:2px;line-height:17px"><i>SCR</i></div>
<div class="c" style="left:45px;top:544px;width:97px;height:3px;color:#000;border-right:1px dotted #bcbcbc;padding-left:2px;line-height:17px"><i>AGE_JOU</i></div>
<div class="c" style="left:142px;top:544px;width:145px;height:3px;color:#000;border-right:1px dotted #bcbcbc;padding-left:2px;line-height:17px"><i>Jours</i></div>
<div class="c" style="left:287px;top:544px;width:185px;height:3px;color:#000;border-right:1px dotted #bcbcbc;padding-left:2px;line-height:17px"><i>Jours</i></div>
<div class="c" style="left:472px;top:544px;width:41px;height:3px;color:#000;border-right:1px dotted #bcbcbc;padding-left:2px;line-height:17px"><i></i></div>
<div class="c" style="left:513px;top:544px;width:73px;height:3px;color:#000;border-right:1px dotted #bcbcbc;padding-left:2px;line-height:17px"><i>Caractère</i></div>
<div class="c" style="left:586px;top:544px;width:17px;height:3px;color:#000;border-right:1px dotted #bcbcbc;padding-left:2px;line-height:17px"><i>V</i></div>
<div class="a" style="left:485px;top:546px;width:13px;height:1px;border-top:1px solid #333"></div>
<div class="a" style="left:4px;top:337px;width:598px;height:15px;border-top:1px dotted #222;border-bottom:1px dotted #222"></div>
<div class="a" style="left:602px;top:337px;width:1px;height:210px;background:#a0a0a0"></div>
<div class="btn" style="left:9px;top:554px;width:80px"><i class="s">Validation</i></div>
<div class="btn" style="left:93px;top:554px;width:80px;padding-left:16px"><i class="s">Abandon</i></div>
<svg class="a" style="left:104px;top:558px" width="12" height="12" viewBox="0 0 12 12"><path d="M1.5 1.5 L10.5 10.5 M10.5 1.5 L1.5 10.5" stroke="#e8542a" stroke-width="2.7" fill="none"/></svg>
<div class="win" style="left:610px;top:292px;width:381px;height:426px;border-left:2px solid #dfe8f1"></div>
<div class="tb" style="left:612px;top:292px;width:379px;height:19px;line-height:20px"><span class="a" style="left:35px;top:0;letter-spacing:0.11px">Paramètres ENT = Graphique /&nbsp; GRP =&nbsp; CND-VOCA</span></div>
<svg class="a" style="left:622px;top:297px" width="16" height="12" viewBox="0 0 16 12"><path d="M5 0 H15 V1.5 L11.2 5.3 V9.8 L9.8 9.8 L8.8 8.6 V5.9 L5 1.3 Z" fill="#fff"/><path d="M0 2.2 L4.3 1.5 L6.9 5.7 V10.5 L5.9 10.3 L4.3 8.9 V6.6 Z" fill="#fff"/></svg>
<svg class="a" style="left:947px;top:299px" width="42" height="16" viewBox="0 0 42 16"><g transform="scale(1,0.8)"><path d="M0.5 5.5 H17 M12.5 1 L17 5.5 L12.5 10 M18.5 0 V11" stroke="#fff" stroke-width="1.2" fill="none"/><path d="M31 -1 V9 M26.5 4.5 L31 9 L35.5 4.5 M25.5 11.5 H36.5" stroke="#fff" stroke-width="1.2" fill="none"/></g></svg>
<div class="a" style="left:612px;top:311px;width:379px;height:377px;background:#fff;border-left:1px solid #555;border-bottom:1px solid #555;border-top:1px solid #4e5e60"></div>
<div class="hd" style="left:613px;top:312px;width:105px;height:18px;line-height:18px"><i class="s">Paramètre</i></div>
<div class="hd" style="left:718px;top:312px;width:113px;height:18px;line-height:18px"><i class="s">Désignation (ML)</i></div>
<div class="hd" style="left:831px;top:312px;width:114px;height:18px;line-height:18px"><i class="s">Désignation</i></div>
<div class="hd" style="left:945px;top:312px;width:17px;height:18px;line-height:18px"><i class="s">E</i></div>
<div class="a" style="left:613px;top:329px;width:348px;height:16px;background:#b7daf4;border-top:1px solid transparent;background-clip:padding-box"></div>
<div class="c" style="left:613px;top:329px;width:105px;height:16px;color:#1c3552;border-right:1px dotted #bcbcbc;padding-left:2px;line-height:17px"><i></i></div>
<div class="c" style="left:718px;top:329px;width:113px;height:16px;color:#1c3552;border-right:1px dotted #bcbcbc;padding-left:2px;line-height:17px"><i></i></div>
<div class="c" style="left:831px;top:329px;width:114px;height:16px;color:#1c3552;border-right:1px dotted #bcbcbc;padding-left:2px;line-height:17px"><i></i></div>
<div class="c" style="left:945px;top:329px;width:17px;height:16px;color:#1c3552;border-right:1px dotted #bcbcbc;padding-left:2px;line-height:17px"><i>V</i></div>
<div class="a" style="left:613px;top:345px;width:348px;height:16px;background:#d5e2f2;border-top:1px dotted #b4b4b4;background-clip:padding-box"></div>
<div class="c" style="left:613px;top:345px;width:105px;height:16px;color:#000;border-right:1px dotted #bcbcbc;padding-left:2px;line-height:17px"><i>+</i></div>
<div class="c" style="left:718px;top:345px;width:113px;height:16px;color:#000;border-right:1px dotted #bcbcbc;padding-left:2px;line-height:17px"><i>+</i></div>
<div class="c" style="left:831px;top:345px;width:114px;height:16px;color:#000;border-right:1px dotted #bcbcbc;padding-left:2px;line-height:17px"><i>+</i></div>
<div class="c" style="left:945px;top:345px;width:17px;height:16px;color:#000;border-right:1px dotted #bcbcbc;padding-left:2px;line-height:17px"><i>V</i></div>
<div class="a" style="left:613px;top:361px;width:348px;height:16px;background:#fff;border-top:1px dotted #b4b4b4;background-clip:padding-box"></div>
<div class="c" style="left:613px;top:361px;width:105px;height:16px;color:#000;border-right:1px dotted #bcbcbc;padding-left:2px;line-height:17px"><i>-</i></div>
<div class="c" style="left:718px;top:361px;width:113px;height:16px;color:#000;border-right:1px dotted #bcbcbc;padding-left:2px;line-height:17px"><i>-</i></div>
<div class="c" style="left:831px;top:361px;width:114px;height:16px;color:#000;border-right:1px dotted #bcbcbc;padding-left:2px;line-height:17px"><i>-</i></div>
<div class="c" style="left:945px;top:361px;width:17px;height:16px;color:#000;border-right:1px dotted #bcbcbc;padding-left:2px;line-height:17px"><i>V</i></div>
<div class="a" style="left:613px;top:377px;width:348px;height:16px;background:#d5e2f2;border-top:1px dotted #b4b4b4;background-clip:padding-box"></div>
<div class="c" style="left:613px;top:377px;width:105px;height:16px;color:#000;border-right:1px dotted #bcbcbc;padding-left:2px;line-height:17px"><i>/</i></div>
<div class="c" style="left:718px;top:377px;width:113px;height:16px;color:#000;border-right:1px dotted #bcbcbc;padding-left:2px;line-height:17px"><i>/</i></div>
<div class="c" style="left:831px;top:377px;width:114px;height:16px;color:#000;border-right:1px dotted #bcbcbc;padding-left:2px;line-height:17px"><i>/</i></div>
<div class="c" style="left:945px;top:377px;width:17px;height:16px;color:#000;border-right:1px dotted #bcbcbc;padding-left:2px;line-height:17px"><i>V</i></div>
<div class="a" style="left:613px;top:393px;width:348px;height:16px;background:#fff;border-top:1px dotted #b4b4b4;background-clip:padding-box"></div>
<div class="c" style="left:613px;top:393px;width:105px;height:16px;color:#000;border-right:1px dotted #bcbcbc;padding-left:2px;line-height:17px"><i>=</i></div>
<div class="c" style="left:718px;top:393px;width:113px;height:16px;color:#000;border-right:1px dotted #bcbcbc;padding-left:2px;line-height:17px"><i>=</i></div>
<div class="c" style="left:831px;top:393px;width:114px;height:16px;color:#000;border-right:1px dotted #bcbcbc;padding-left:2px;line-height:17px"><i>=</i></div>
<div class="c" style="left:945px;top:393px;width:17px;height:16px;color:#000;border-right:1px dotted #bcbcbc;padding-left:2px;line-height:17px"><i>V</i></div>
<div class="a" style="left:613px;top:409px;width:348px;height:16px;background:#d5e2f2;border-top:1px dotted #b4b4b4;background-clip:padding-box"></div>
<div class="c" style="left:613px;top:409px;width:105px;height:16px;color:#000;border-right:1px dotted #bcbcbc;padding-left:2px;line-height:17px"><i>ANNEE</i></div>
<div class="c" style="left:718px;top:409px;width:113px;height:16px;color:#000;border-right:1px dotted #bcbcbc;padding-left:2px;line-height:17px"><i>Année</i></div>
<div class="c" style="left:831px;top:409px;width:114px;height:16px;color:#000;border-right:1px dotted #bcbcbc;padding-left:2px;line-height:17px"><i>Année</i></div>
<div class="c" style="left:945px;top:409px;width:17px;height:16px;color:#000;border-right:1px dotted #bcbcbc;padding-left:2px;line-height:17px"><i>V</i></div>
<div class="a" style="left:613px;top:425px;width:348px;height:16px;background:#fff;border-top:1px dotted #b4b4b4;background-clip:padding-box"></div>
<div class="c" style="left:613px;top:425px;width:105px;height:16px;color:#000;border-right:1px dotted #bcbcbc;padding-left:2px;line-height:17px"><i>AVEC</i></div>
<div class="c" style="left:718px;top:425px;width:113px;height:16px;color:#000;border-right:1px dotted #bcbcbc;padding-left:2px;line-height:17px"><i>Avec (multi-table)</i></div>
<div class="c" style="left:831px;top:425px;width:114px;height:16px;color:#000;border-right:1px dotted #bcbcbc;padding-left:2px;line-height:17px"><i>Avec (multi-table)</i></div>
<div class="c" style="left:945px;top:425px;width:17px;height:16px;color:#000;border-right:1px dotted #bcbcbc;padding-left:2px;line-height:17px"><i>V</i></div>
<div class="a" style="left:613px;top:441px;width:348px;height:16px;background:#d5e2f2;border-top:1px dotted #b4b4b4;background-clip:padding-box"></div>
<div class="c" style="left:613px;top:441px;width:105px;height:16px;color:#000;border-right:1px dotted #bcbcbc;padding-left:2px;line-height:17px"><i>CHAQUE</i></div>
<div class="c" style="left:718px;top:441px;width:113px;height:16px;color:#000;border-right:1px dotted #bcbcbc;padding-left:2px;line-height:17px"><i>Chaque (multi-table)</i></div>
<div class="c" style="left:831px;top:441px;width:114px;height:16px;color:#000;border-right:1px dotted #bcbcbc;padding-left:2px;line-height:17px"><i>Chaque (multi-table)</i></div>
<div class="c" style="left:945px;top:441px;width:17px;height:16px;color:#000;border-right:1px dotted #bcbcbc;padding-left:2px;line-height:17px"><i>V</i></div>
<div class="a" style="left:613px;top:457px;width:348px;height:16px;background:#fff;border-top:1px dotted #b4b4b4;background-clip:padding-box"></div>
<div class="c" style="left:613px;top:457px;width:105px;height:16px;color:#000;border-right:1px dotted #bcbcbc;padding-left:2px;line-height:17px"><i>COMMENCEPAR</i></div>
<div class="c" style="left:718px;top:457px;width:113px;height:16px;color:#000;border-right:1px dotted #bcbcbc;padding-left:2px;line-height:17px"><i>Commence Par</i></div>
<div class="c" style="left:831px;top:457px;width:114px;height:16px;color:#000;border-right:1px dotted #bcbcbc;padding-left:2px;line-height:17px"><i>Commence Par</i></div>
<div class="c" style="left:945px;top:457px;width:17px;height:16px;color:#000;border-right:1px dotted #bcbcbc;padding-left:2px;line-height:17px"><i>V</i></div>
<div class="a" style="left:613px;top:473px;width:348px;height:16px;background:#d5e2f2;border-top:1px dotted #b4b4b4;background-clip:padding-box"></div>
<div class="c" style="left:613px;top:473px;width:105px;height:16px;color:#000;border-right:1px dotted #bcbcbc;padding-left:2px;line-height:17px"><i>CONTIENT</i></div>
<div class="c" style="left:718px;top:473px;width:113px;height:16px;color:#000;border-right:1px dotted #bcbcbc;padding-left:2px;line-height:17px"><i>Contient</i></div>
<div class="c" style="left:831px;top:473px;width:114px;height:16px;color:#000;border-right:1px dotted #bcbcbc;padding-left:2px;line-height:17px"><i>Contient</i></div>
<div class="c" style="left:945px;top:473px;width:17px;height:16px;color:#000;border-right:1px dotted #bcbcbc;padding-left:2px;line-height:17px"><i>V</i></div>
<div class="a" style="left:613px;top:489px;width:348px;height:16px;background:#fff;border-top:1px dotted #b4b4b4;background-clip:padding-box"></div>
<div class="c" style="left:613px;top:489px;width:105px;height:16px;color:#000;border-right:1px dotted #bcbcbc;padding-left:2px;line-height:17px"><i>DATE-JOUR</i></div>
<div class="c" style="left:718px;top:489px;width:113px;height:16px;color:#000;border-right:1px dotted #bcbcbc;padding-left:2px;line-height:17px"><i>Aujourd'hui</i></div>
<div class="c" style="left:831px;top:489px;width:114px;height:16px;color:#000;border-right:1px dotted #bcbcbc;padding-left:2px;line-height:17px"><i>Aujourd'hui</i></div>
<div class="c" style="left:945px;top:489px;width:17px;height:16px;color:#000;border-right:1px dotted #bcbcbc;padding-left:2px;line-height:17px"><i>V</i></div>
<div class="a" style="left:613px;top:505px;width:348px;height:16px;background:#d5e2f2;border-top:1px dotted #b4b4b4;background-clip:padding-box"></div>
<div class="c" style="left:613px;top:505px;width:105px;height:16px;color:#000;border-right:1px dotted #bcbcbc;padding-left:2px;line-height:17px"><i>DERNIER</i></div>
<div class="c" style="left:718px;top:505px;width:113px;height:16px;color:#000;border-right:1px dotted #bcbcbc;padding-left:2px;line-height:17px"><i>Dernier (multi-table)</i></div>
<div class="c" style="left:831px;top:505px;width:114px;height:16px;color:#000;border-right:1px dotted #bcbcbc;padding-left:2px;line-height:17px"><i>Dernier (multi-table)</i></div>
<div class="c" style="left:945px;top:505px;width:17px;height:16px;color:#000;border-right:1px dotted #bcbcbc;padding-left:2px;line-height:17px"><i>V</i></div>
<div class="a" style="left:613px;top:521px;width:348px;height:16px;background:#fff;border-top:1px dotted #b4b4b4;background-clip:padding-box"></div>
<div class="c" style="left:613px;top:521px;width:105px;height:16px;color:#000;border-right:1px dotted #bcbcbc;padding-left:2px;line-height:17px"><i>DIFFERENT</i></div>
<div class="c" style="left:718px;top:521px;width:113px;height:16px;color:#000;border-right:1px dotted #bcbcbc;padding-left:2px;line-height:17px"><i>&lt;&gt;</i></div>
<div class="c" style="left:831px;top:521px;width:114px;height:16px;color:#000;border-right:1px dotted #bcbcbc;padding-left:2px;line-height:17px"><i>&lt;&gt;</i></div>
<div class="c" style="left:945px;top:521px;width:17px;height:16px;color:#000;border-right:1px dotted #bcbcbc;padding-left:2px;line-height:17px"><i>V</i></div>
<div class="a" style="left:613px;top:537px;width:348px;height:16px;background:#d5e2f2;border-top:1px dotted #b4b4b4;background-clip:padding-box"></div>
<div class="c" style="left:613px;top:537px;width:105px;height:16px;color:#000;border-right:1px dotted #bcbcbc;padding-left:2px;line-height:17px"><i>ET</i></div>
<div class="c" style="left:718px;top:537px;width:113px;height:16px;color:#000;border-right:1px dotted #bcbcbc;padding-left:2px;line-height:17px"><i>ET</i></div>
<div class="c" style="left:831px;top:537px;width:114px;height:16px;color:#000;border-right:1px dotted #bcbcbc;padding-left:2px;line-height:17px"><i>ET</i></div>
<div class="c" style="left:945px;top:537px;width:17px;height:16px;color:#000;border-right:1px dotted #bcbcbc;padding-left:2px;line-height:17px"><i>V</i></div>
<div class="a" style="left:613px;top:553px;width:348px;height:16px;background:#fff;border-top:1px dotted #b4b4b4;background-clip:padding-box"></div>
<div class="c" style="left:613px;top:553px;width:105px;height:16px;color:#000;border-right:1px dotted #bcbcbc;padding-left:2px;line-height:17px"><i>EXP</i></div>
<div class="c" style="left:718px;top:553px;width:113px;height:16px;color:#000;border-right:1px dotted #bcbcbc;padding-left:2px;line-height:17px"><i>Puissance</i></div>
<div class="c" style="left:831px;top:553px;width:114px;height:16px;color:#000;border-right:1px dotted #bcbcbc;padding-left:2px;line-height:17px"><i>Puissance</i></div>
<div class="c" style="left:945px;top:553px;width:17px;height:16px;color:#000;border-right:1px dotted #bcbcbc;padding-left:2px;line-height:17px"><i>V</i></div>
<div class="a" style="left:613px;top:569px;width:348px;height:16px;background:#d5e2f2;border-top:1px dotted #b4b4b4;background-clip:padding-box"></div>
<div class="c" style="left:613px;top:569px;width:105px;height:16px;color:#000;border-right:1px dotted #bcbcbc;padding-left:2px;line-height:17px"><i>FAUX</i></div>
<div class="c" style="left:718px;top:569px;width:113px;height:16px;color:#000;border-right:1px dotted #bcbcbc;padding-left:2px;line-height:17px"><i>Faux</i></div>
<div class="c" style="left:831px;top:569px;width:114px;height:16px;color:#000;border-right:1px dotted #bcbcbc;padding-left:2px;line-height:17px"><i>Faux</i></div>
<div class="c" style="left:945px;top:569px;width:17px;height:16px;color:#000;border-right:1px dotted #bcbcbc;padding-left:2px;line-height:17px"><i>V</i></div>
<div class="a" style="left:613px;top:585px;width:348px;height:16px;background:#fff;border-top:1px dotted #b4b4b4;background-clip:padding-box"></div>
<div class="c" style="left:613px;top:585px;width:105px;height:16px;color:#000;border-right:1px dotted #bcbcbc;padding-left:2px;line-height:17px"><i>HEUR-ACT</i></div>
<div class="c" style="left:718px;top:585px;width:113px;height:16px;color:#000;border-right:1px dotted #bcbcbc;padding-left:2px;line-height:17px"><i>Heure Actuelle</i></div>
<div class="c" style="left:831px;top:585px;width:114px;height:16px;color:#000;border-right:1px dotted #bcbcbc;padding-left:2px;line-height:17px"><i>Heure Actuelle</i></div>
<div class="c" style="left:945px;top:585px;width:17px;height:16px;color:#000;border-right:1px dotted #bcbcbc;padding-left:2px;line-height:17px"><i>V</i></div>
<div class="a" style="left:613px;top:601px;width:348px;height:16px;background:#d5e2f2;border-top:1px dotted #b4b4b4;background-clip:padding-box"></div>
<div class="c" style="left:613px;top:601px;width:105px;height:16px;color:#000;border-right:1px dotted #bcbcbc;padding-left:2px;line-height:17px"><i>INFERIEUR</i></div>
<div class="c" style="left:718px;top:601px;width:113px;height:16px;color:#000;border-right:1px dotted #bcbcbc;padding-left:2px;line-height:17px"><i>&lt;</i></div>
<div class="c" style="left:831px;top:601px;width:114px;height:16px;color:#000;border-right:1px dotted #bcbcbc;padding-left:2px;line-height:17px"><i>&lt;</i></div>
<div class="c" style="left:945px;top:601px;width:17px;height:16px;color:#000;border-right:1px dotted #bcbcbc;padding-left:2px;line-height:17px"><i>V</i></div>
<div class="a" style="left:613px;top:617px;width:348px;height:16px;background:#fff;border-top:1px dotted #b4b4b4;background-clip:padding-box"></div>
<div class="c" style="left:613px;top:617px;width:105px;height:16px;color:#000;border-right:1px dotted #bcbcbc;padding-left:2px;line-height:17px"><i>INFERIEUREGAL</i></div>
<div class="c" style="left:718px;top:617px;width:113px;height:16px;color:#000;border-right:1px dotted #bcbcbc;padding-left:2px;line-height:17px"><i>&lt;=</i></div>
<div class="c" style="left:831px;top:617px;width:114px;height:16px;color:#000;border-right:1px dotted #bcbcbc;padding-left:2px;line-height:17px"><i>&lt;=</i></div>
<div class="c" style="left:945px;top:617px;width:17px;height:16px;color:#000;border-right:1px dotted #bcbcbc;padding-left:2px;line-height:17px"><i>V</i></div>
<div class="a" style="left:613px;top:633px;width:348px;height:16px;background:#d5e2f2;border-top:1px dotted #b4b4b4;background-clip:padding-box"></div>
<div class="c" style="left:613px;top:633px;width:105px;height:16px;color:#000;border-right:1px dotted #bcbcbc;padding-left:2px;line-height:17px"><i>LOG</i></div>
<div class="c" style="left:718px;top:633px;width:113px;height:16px;color:#000;border-right:1px dotted #bcbcbc;padding-left:2px;line-height:17px"><i>Logarithme</i></div>
<div class="c" style="left:831px;top:633px;width:114px;height:16px;color:#000;border-right:1px dotted #bcbcbc;padding-left:2px;line-height:17px"><i>Logarithme</i></div>
<div class="c" style="left:945px;top:633px;width:17px;height:16px;color:#000;border-right:1px dotted #bcbcbc;padding-left:2px;line-height:17px"><i>V</i></div>
<div class="a" style="left:613px;top:649px;width:348px;height:16px;background:#fff;border-top:1px dotted #b4b4b4;background-clip:padding-box"></div>
<div class="c" style="left:613px;top:649px;width:105px;height:16px;color:#000;border-right:1px dotted #bcbcbc;padding-left:2px;line-height:17px"><i>MAXIMUM</i></div>
<div class="c" style="left:718px;top:649px;width:113px;height:16px;color:#000;border-right:1px dotted #bcbcbc;padding-left:2px;line-height:17px"><i>Maximum</i></div>
<div class="c" style="left:831px;top:649px;width:114px;height:16px;color:#000;border-right:1px dotted #bcbcbc;padding-left:2px;line-height:17px"><i>Maximum</i></div>
<div class="c" style="left:945px;top:649px;width:17px;height:16px;color:#000;border-right:1px dotted #bcbcbc;padding-left:2px;line-height:17px"><i>V</i></div>
<div class="a" style="left:613px;top:665px;width:348px;height:16px;background:#d5e2f2;border-top:1px dotted #b4b4b4;background-clip:padding-box"></div>
<div class="c" style="left:613px;top:665px;width:105px;height:16px;color:#000;border-right:1px dotted #bcbcbc;padding-left:2px;line-height:17px"><i>MINIMUM</i></div>
<div class="c" style="left:718px;top:665px;width:113px;height:16px;color:#000;border-right:1px dotted #bcbcbc;padding-left:2px;line-height:17px"><i>Minimum</i></div>
<div class="c" style="left:831px;top:665px;width:114px;height:16px;color:#000;border-right:1px dotted #bcbcbc;padding-left:2px;line-height:17px"><i>Minimum</i></div>
<div class="c" style="left:945px;top:665px;width:17px;height:16px;color:#000;border-right:1px dotted #bcbcbc;padding-left:2px;line-height:17px"><i>V</i></div>
<div class="a" style="left:613px;top:681px;width:348px;height:6px;background:#fff;border-top:1px dotted #b4b4b4;background-clip:padding-box"></div>
<div class="c" style="left:613px;top:681px;width:105px;height:6px;color:#000;border-right:1px dotted #bcbcbc;padding-left:2px;line-height:17px"><i>MODULO</i></div>
<div class="c" style="left:718px;top:681px;width:113px;height:6px;color:#000;border-right:1px dotted #bcbcbc;padding-left:2px;line-height:17px"><i>MODULO</i></div>
<div class="c" style="left:831px;top:681px;width:114px;height:6px;color:#000;border-right:1px dotted #bcbcbc;padding-left:2px;line-height:17px"><i>MODULO</i></div>
<div class="c" style="left:945px;top:681px;width:17px;height:6px;color:#000;border-right:1px dotted #bcbcbc;padding-left:2px;line-height:17px"><i>V</i></div>
<div class="a" style="left:961px;top:330px;width:1px;height:357px;background:#a0a0a0"></div>
<svg class="a" style="left:616px;top:333px" width="5" height="5" viewBox="0 0 5 5"><path d="M0.5 0.5 L4.5 4.5 M4.5 0.5 L0.5 4.5" stroke="#1c3552" stroke-width="1.1"/></svg>
<svg class="a" style="left:721px;top:333px" width="5" height="5" viewBox="0 0 5 5"><path d="M0.5 0.5 L4.5 4.5 M4.5 0.5 L0.5 4.5" stroke="#1c3552" stroke-width="1.1"/></svg>
<svg class="a" style="left:834px;top:333px" width="5" height="5" viewBox="0 0 5 5"><path d="M0.5 0.5 L4.5 4.5 M4.5 0.5 L0.5 4.5" stroke="#1c3552" stroke-width="1.1"/></svg>
<div class="a" style="left:613px;top:330px;width:348px;height:15px;border-top:1px dotted #222;border-bottom:1px dotted #222"></div>
<div class="a" style="left:974px;top:311px;width:16px;height:376px;background:#7097c0;border:1px solid #5a7aa0"></div>
<div class="a" style="left:975px;top:312px;width:14px;height:249px;background:linear-gradient(90deg,#d4e3f5 0 45%,#c0d4ef 45%)"></div>
<div class="a" style="left:975px;top:312px;width:14px;height:15px;background:#d9e6f6;border-bottom:1px solid #7f9fc6"></div>
<svg class="a" style="left:977px;top:316px" width="10" height="6"><path d="M0 6 L5 0 L10 6 Z" fill="#2b3a55"/></svg>
<div class="a" style="left:975px;top:671px;width:14px;height:15px;background:#d9e6f6;border-top:1px solid #7f9fc6"></div>
<svg class="a" style="left:977px;top:676px" width="10" height="6"><path d="M0 0 L5 6 L10 0 Z" fill="#2b3a55"/></svg>
<div class="btn" style="left:618px;top:694px;width:80px"><i class="s">Validation</i></div>
<div class="btn" style="left:702px;top:694px;width:80px;padding-left:16px"><i class="s">Abandon</i></div>
<svg class="a" style="left:713px;top:698px" width="12" height="12" viewBox="0 0 12 12"><path d="M1.5 1.5 L10.5 10.5 M10.5 1.5 L1.5 10.5" stroke="#e8542a" stroke-width="2.7" fill="none"/></svg>
<svg class="a" style="left:584px;top:521px" width="16" height="22" viewBox="0 0 16 22"><defs><filter id="cs"><feGaussianBlur stdDeviation="1"/></filter></defs><path d="M1.5 1.5 V18 L5.7 14.6 L9 20.8 L11 19.7 L9.5 13.8 L13.4 13 Z" fill="#000" opacity="0.35" filter="url(#cs)"/><path d="M0.5 0.5 V17 L4.7 13.6 L8 19.8 L10 18.7 L8.5 12.8 L12.4 12 Z" fill="#fff" stroke="#000" stroke-width="1"/></svg>
<svg class="a" style="left:0;top:0" width="991" height="718">
<defs><filter id="sh" x="-10%" y="-10%" width="120%" height="120%"><feGaussianBlur stdDeviation="2"/></filter></defs>
<g opacity="0.45" filter="url(#sh)" transform="translate(0.6,2.6)">
<line x1="587" y1="152" x2="145" y2="309" stroke="#000" stroke-width="3.5"/>
<path d="M136.5 312.5 L145 304.5 L148.5 312 Z" fill="#000"/>
</g>
<line x1="587" y1="152" x2="146" y2="308.5" stroke="#000" stroke-width="1.7"/>
<path d="M136.5 312.5 L145 304.5 L148.5 312 Z" fill="#000"/>
<line x1="612" y1="191" x2="687" y2="294" stroke="#000" stroke-width="1.7"/>
<path d="M692.5 301.5 L683 295.5 L689.5 290 Z" fill="#000"/>
</svg>
</body></html>
